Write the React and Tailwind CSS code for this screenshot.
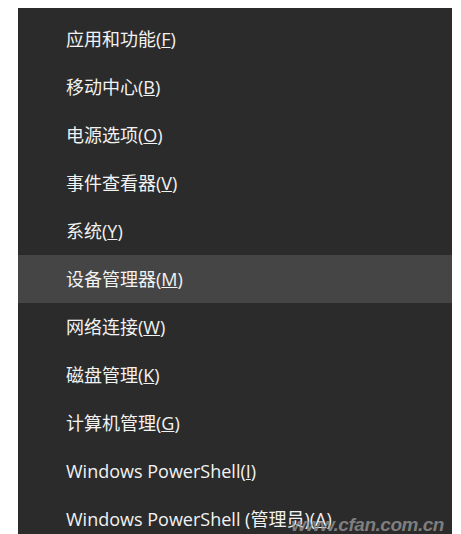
const items = [
  { label: "应用和功能(", key: "F" },
  { label: "移动中心(", key: "B" },
  { label: "电源选项(", key: "O" },
  { label: "事件查看器(", key: "V" },
  { label: "系统(", key: "Y" },
  { label: "设备管理器(", key: "M", active: true },
  { label: "网络连接(", key: "W" },
  { label: "磁盘管理(", key: "K" },
  { label: "计算机管理(", key: "G" },
  { label: "Windows PowerShell(", key: "I" },
  { label: "Windows PowerShell (管理员)(", key: "A" },
];

export default function App() {
  return (
    <div className="w-[461px] h-[534px] bg-white pt-2 pl-[18px] pr-[9px] overflow-hidden">
      <div
        className="relative h-full bg-[#2b2b2b] pt-[7px] text-[#f2f2f2] text-[18px]"
        style={{ fontFamily: '"Open Sans", "Noto Sans CJK SC", sans-serif' }}
      >
        {items.map((item) => (
          <div
            key={item.key}
            className={`h-12 flex items-center pl-12 ${item.active ? "bg-[#454545]" : ""}`}
          >
            <span>
              {item.label}
              <span className="underline underline-offset-1">{item.key}</span>)
            </span>
          </div>
        ))}
        {/* watermark */}
        <div
          className="absolute right-[8px] bottom-0 text-[19px] leading-none font-bold italic text-[#9a9a9a]/75 tracking-tight"
          style={{ fontFamily: '"Liberation Sans", sans-serif' }}
        >
          www.cfan.com.cn
        </div>
      </div>
    </div>
  );
}
